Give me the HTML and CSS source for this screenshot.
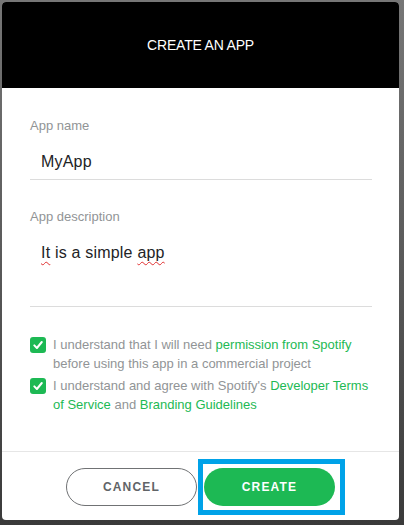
FILE: index.html
```html
<!DOCTYPE html>
<html lang="en">
<head>
<meta charset="utf-8">
<title>Create an app</title>
<link rel="stylesheet" href="styles.css">
</head>
<body>
<div class="overlay">
  <div class="modal">
    <header class="modal-header">
      <h1 class="modal-title">CREATE AN APP</h1>
    </header>
    <form class="modal-body">
      <label class="label">App name</label>
      <div class="field">MyApp</div>
      <label class="label label-second">App description</label>
      <div class="field field-area"><span class="typo">It</span> is a simple <span class="typo">app</span></div>
      <div class="checks">
        <div class="check-row">
          <span class="checkbox"><svg viewBox="0 0 16 16" width="16" height="16"><path d="M4.3 8.4 L6.9 11 L11.8 5" fill="none" stroke="#fff" stroke-width="2" stroke-linecap="round" stroke-linejoin="round"/></svg></span>
          <p class="check-text">I understand that I will need <a class="link">permission from Spotify</a> before using this app in a commercial project</p>
        </div>
        <div class="check-row">
          <span class="checkbox"><svg viewBox="0 0 16 16" width="16" height="16"><path d="M4.3 8.4 L6.9 11 L11.8 5" fill="none" stroke="#fff" stroke-width="2" stroke-linecap="round" stroke-linejoin="round"/></svg></span>
          <p class="check-text">I understand and agree with Spotify's <a class="link">Developer Terms of Service</a> and <a class="link">Branding Guidelines</a></p>
        </div>
      </div>
    </form>
    <footer class="modal-footer">
      <button class="btn btn-cancel" type="button">CANCEL</button>
      <span class="create-wrap">
        <button class="btn btn-create" type="button">CREATE</button>
        <span class="highlight"></span>
      </span>
    </footer>
  </div>
</div>
</body>
</html>
```
FILE: styles.css
```css
html, body {
  margin: 0;
  padding: 0;
}
body {
  width: 404px;
  height: 525px;
  background: linear-gradient(180deg, #767676 0%, #5a5a5a 50%, #3a3a3a 100%);
  font-family: "Liberation Sans", Arial, sans-serif;
  overflow: hidden;
}
.overlay {
  padding: 2px 0 0 2px;
}
.modal {
  width: 397px;
  height: 518px;
  background: #fff;
  border-radius: 4px;
  overflow: hidden;
  display: flex;
  flex-direction: column;
}
.modal-header {
  height: 86px;
  background: #000;
  display: flex;
  align-items: center;
  justify-content: center;
}
.modal-title {
  margin: 0;
  color: #fff;
  font-size: 14px;
  font-weight: normal;
  line-height: 16px;
  letter-spacing: -0.2px;
}
.modal-body {
  flex: 1;
  padding: 30px 27px 0 28px;
  display: flex;
  flex-direction: column;
}
.label {
  display: block;
  color: #919496;
  font-size: 13px;
  line-height: 16px;
}
.label-second {
  margin-top: 29px;
}
.field {
  margin-top: 8px;
  padding: 10px 11px 7px;
  font-size: 16px;
  line-height: 20px;
  color: #222326;
  border-bottom: 1px solid #dcdcdc;
  letter-spacing: 0.2px;
}
.field-area {
  padding-bottom: 43px;
}
.typo {
  text-decoration: underline wavy #e03030;
  text-decoration-thickness: 1px;
  text-underline-offset: 3px;
}
.checks {
  margin-top: 28px;
  display: flex;
  flex-direction: column;
  gap: 3px;
}
.check-row {
  display: flex;
  align-items: flex-start;
  gap: 7px;
}
.checkbox {
  flex: none;
  width: 16px;
  height: 16px;
  margin-top: 2px;
  border-radius: 3px;
  background: #1db954;
  display: flex;
}
.check-text {
  margin: 0;
  color: #919496;
  font-size: 13px;
  line-height: 19px;
}
.link {
  color: #1db954;
}
.modal-footer {
  border-top: 1px solid #e6e6e6;
  padding: 16px 0 14px;
  display: flex;
  justify-content: center;
  gap: 7px;
}
.btn {
  width: 131px;
  height: 38px;
  border-radius: 19px;
  font-family: "Liberation Sans", Arial, sans-serif;
  font-size: 12px;
  font-weight: bold;
  letter-spacing: 1.2px;
  padding: 0;
  cursor: pointer;
}
.btn-cancel {
  background: #fff;
  border: 1.5px solid #707274;
  color: #616467;
}
.btn-create {
  background: #1db954;
  border: none;
  color: #fff;
}
.create-wrap {
  position: relative;
  display: flex;
}
.highlight {
  position: absolute;
  left: -6px;
  top: -9px;
  width: 137px;
  height: 46px;
  border: 5px solid #00a2e8;
  pointer-events: none;
}
```
